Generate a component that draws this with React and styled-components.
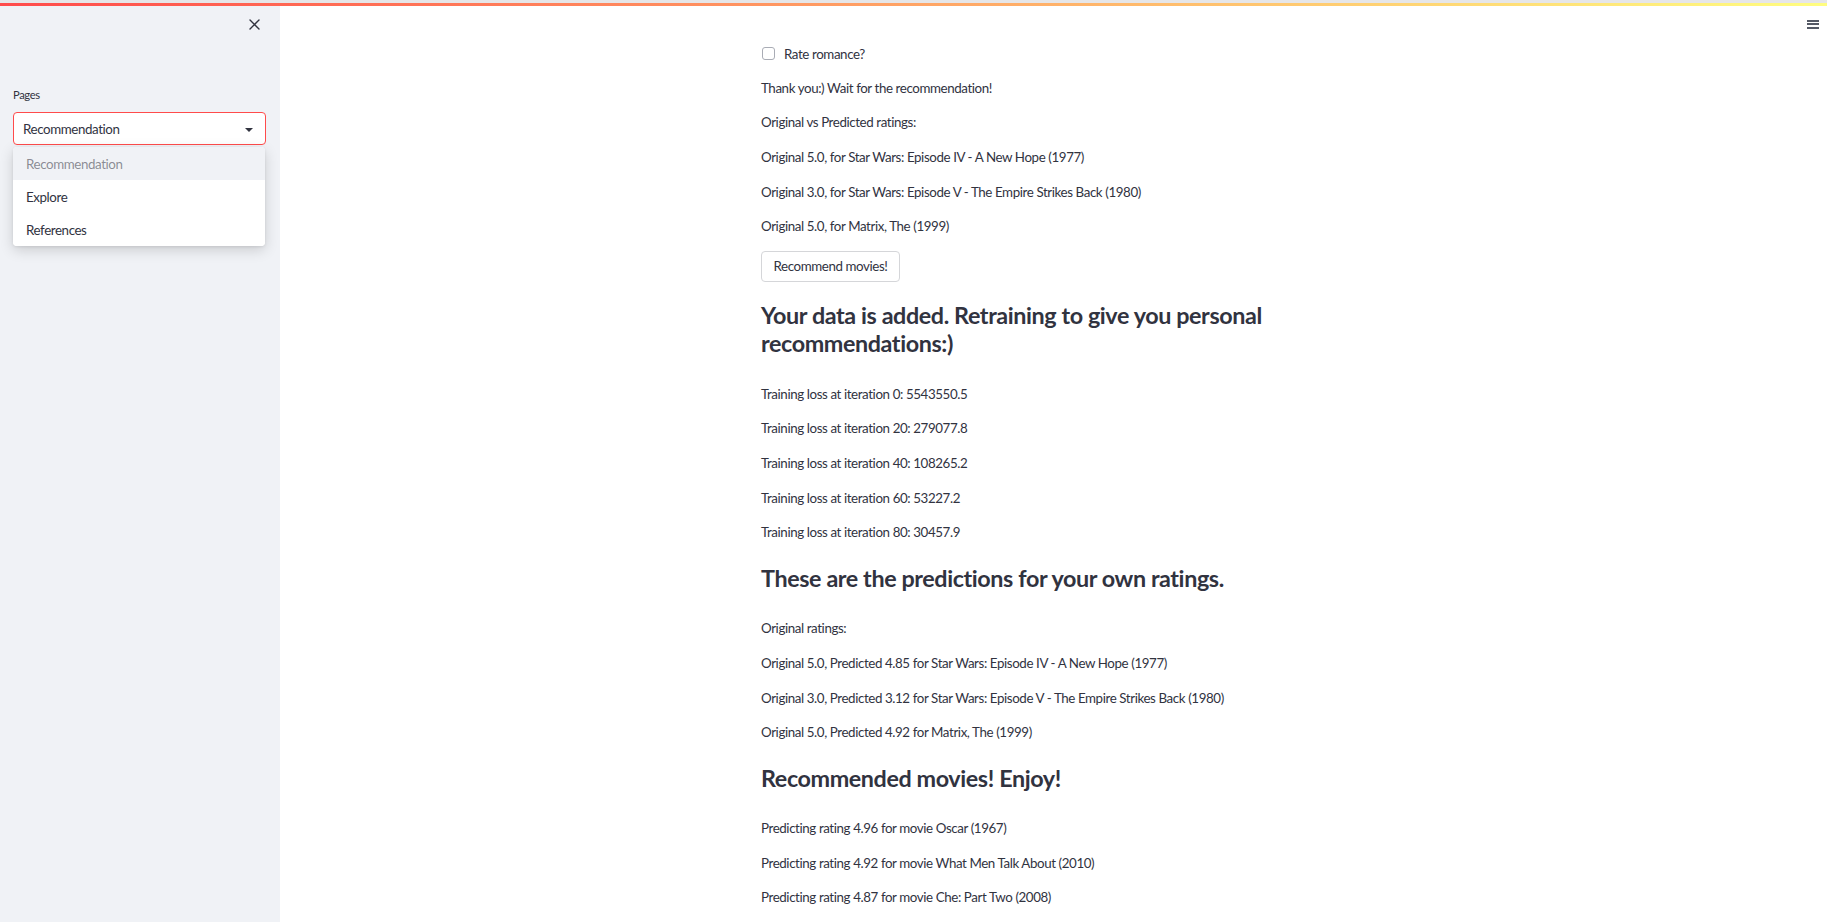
import React from 'react'
import styled, { createGlobalStyle } from 'styled-components'

const GlobalStyle = createGlobalStyle`
    html, body {
        margin: 0;
        padding: 0;
        background: #ffffff;
    }
    body {
        font-family: Lato, "Noto Sans", sans-serif;
        color: #31333f;
        -webkit-font-smoothing: antialiased;
    }
`

const text = '#31333f'

const Shell = styled.div`
    position: relative;
    display: flex;
    height: 922px;
    overflow: hidden;
    font-size: 13.33px;
    letter-spacing: -0.4px;
`

const Decoration = styled.div`
    position: absolute;
    top: 0;
    left: 0;
    right: 0;
    height: 3px;
    border-top: 3px solid #e6e6e8;
    background: linear-gradient(90deg, #ff4b4b, #fffd80);
    z-index: 5;
`

const Sidebar = styled.aside`
    position: relative;
    flex: 0 0 280px;
    background: #f0f2f6;
    padding: 0 14px 0 13px;
    box-sizing: border-box;
`

const CloseRow = styled.div`
    display: flex;
    justify-content: flex-end;
    padding: 19px 6px 0 0;
    height: 31px;
    box-sizing: border-box;
`

const IconButton = styled.button`
    border: none;
    background: none;
    padding: 0;
    margin: 0;
    display: flex;
    color: ${text};
    cursor: pointer;
`

const Label = styled.div`
    margin-top: 56px;
    font-size: 11.2px;
    line-height: 16px;
    color: ${text};
`

const SelectWrap = styled.div`
    position: relative;
    margin-top: 9px;
`

const SelectBox = styled.div`
    display: flex;
    align-items: center;
    justify-content: space-between;
    height: 33px;
    box-sizing: border-box;
    padding: 0 12px 0 9px;
    background: #ffffff;
    border: 1px solid #ff4b4b;
    border-radius: 4px;
    font-size: 13.33px;
    color: ${text};
`

const Caret = styled.span`
    width: 0;
    height: 0;
    border-left: 4px solid transparent;
    border-right: 4px solid transparent;
    border-top: 4px solid ${text};
    margin-top: 2px;
`

const Menu = styled.ul`
    position: absolute;
    top: 35px;
    left: 0;
    right: 1px;
    margin: 0;
    padding: 0;
    list-style: none;
    background: #ffffff;
    border-radius: 4px;
    box-shadow: 0 4px 14px rgba(0, 0, 0, 0.16), 0 1px 3px rgba(0, 0, 0, 0.08);
    overflow: hidden;
    z-index: 10;
`

const MenuItem = styled.li`
    height: 33px;
    display: flex;
    align-items: center;
    padding-left: 13px;
    font-size: 13.33px;
    background: ${p => (p.$active ? '#f0f2f6' : '#ffffff')};
    color: ${p => (p.$active ? 'rgba(49, 51, 63, 0.55)' : text)};
`

const Main = styled.main`
    flex: 1;
    display: flex;
    justify-content: center;
    overflow: hidden;
`

const Block = styled.div`
    width: 613px;
    box-sizing: border-box;
    padding: 43px 13.33px 0 14px;
    display: flex;
    flex-direction: column;
    gap: 13.33px;
`

const Para = styled.p`
    margin: 0;
    font-size: 13.33px;
    line-height: 21.33px;
    color: ${text};
`

const CheckRow = styled.label`
    display: flex;
    align-items: center;
    gap: 9px;
    height: 21.33px;
    font-size: 13.33px;
    color: ${text};
`

const CheckBox = styled.span`
    width: 13px;
    height: 13px;
    box-sizing: border-box;
    border: 1px solid #a9acb5;
    border-radius: 3px;
    background: #ffffff;
    margin-left: 1px;
`

const Button = styled.button`
    align-self: flex-start;
    height: 31px;
    padding: 0 11.5px;
    background: #ffffff;
    border: 1px solid #d5d6d9;
    border-radius: 4px;
    font-family: inherit;
    font-size: 13.33px;
    letter-spacing: inherit;
    color: ${text};
`

const Heading = styled.h3`
    margin: 0;
    padding: ${p => (p.$tight ? '6px' : '7px')} 0 13px;
    font-size: 23.33px;
    line-height: 28px;
    font-weight: 700;
    color: ${text};
`

const Hamburger = styled.button`
    position: absolute;
    top: 20px;
    right: 8px;
    width: 12px;
    padding: 0;
    border: none;
    background: none;
    display: flex;
    flex-direction: column;
    gap: 1.4px;
    span {
        height: 2px;
        background: #555a66;
    }
`

const original = [
    'Original 5.0, for Star Wars: Episode IV - A New Hope (1977)',
    'Original 3.0, for Star Wars: Episode V - The Empire Strikes Back (1980)',
    'Original 5.0, for Matrix, The (1999)',
]

const losses = [
    ['0', '5543550.5'],
    ['20', '279077.8'],
    ['40', '108265.2'],
    ['60', '53227.2'],
    ['80', '30457.9'],
]

const predicted = [
    'Original 5.0, Predicted 4.85 for Star Wars: Episode IV - A New Hope (1977)',
    'Original 3.0, Predicted 3.12 for Star Wars: Episode V - The Empire Strikes Back (1980)',
    'Original 5.0, Predicted 4.92 for Matrix, The (1999)',
]

const recs = [
    ['4.96', 'Oscar (1967)'],
    ['4.92', 'What Men Talk About (2010)'],
    ['4.87', 'Che: Part Two (2008)'],
]

export default function App() {
    return (
        <Shell>
            <GlobalStyle />
            <Decoration />
            <Sidebar>
                <CloseRow>
                    <IconButton aria-label="Close sidebar">
                        <svg width="11" height="11" viewBox="0 0 11 11">
                            <path d="M1 1L10 10M10 1L1 10" stroke={text} strokeWidth="1.4" strokeLinecap="round" />
                        </svg>
                    </IconButton>
                </CloseRow>
                <Label>Pages</Label>
                <SelectWrap>
                    <SelectBox>
                        Recommendation
                        <Caret />
                    </SelectBox>
                    <Menu>
                        <MenuItem $active>Recommendation</MenuItem>
                        <MenuItem>Explore</MenuItem>
                        <MenuItem>References</MenuItem>
                    </Menu>
                </SelectWrap>
            </Sidebar>
            <Main>
                <Block>
                    <CheckRow>
                        <CheckBox />
                        Rate romance?
                    </CheckRow>
                    <Para>Thank you:) Wait for the recommendation!</Para>
                    <Para>Original vs Predicted ratings:</Para>
                    {original.map(line => <Para key={line}>{line}</Para>)}
                    <Button>Recommend movies!</Button>
                    <Heading $tight>Your data is added. Retraining to give you personal recommendations:)</Heading>
                    {losses.map(([it, v]) => (
                        <Para key={it}>Training loss at iteration {it}: {v}</Para>
                    ))}
                    <Heading>These are the predictions for your own ratings.</Heading>
                    <Para>Original ratings:</Para>
                    {predicted.map(line => <Para key={line}>{line}</Para>)}
                    <Heading>Recommended movies! Enjoy!</Heading>
                    {recs.map(([r, m]) => (
                        <Para key={m}>Predicting rating {r} for movie {m}</Para>
                    ))}
                </Block>
            </Main>
            <Hamburger aria-label="Menu">
                <span />
                <span />
                <span />
            </Hamburger>
        </Shell>
    )
}
